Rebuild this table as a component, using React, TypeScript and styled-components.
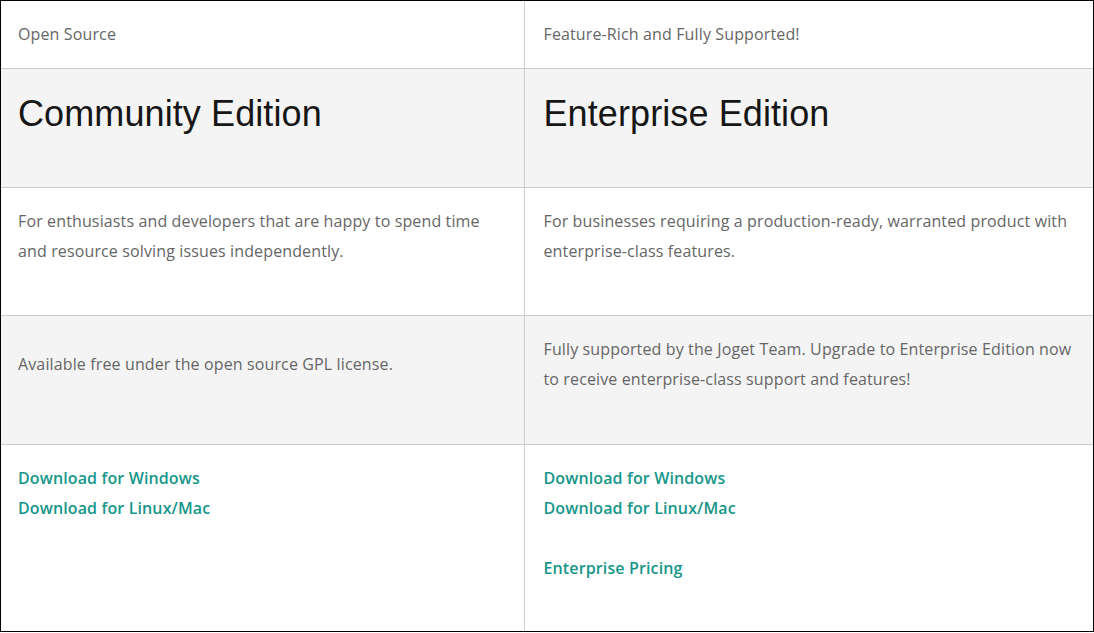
import React from "react";
import styled, { createGlobalStyle } from "styled-components";

const Global = createGlobalStyle`
  html, body { margin: 0; padding: 0; background: #fff; }
  * { box-sizing: border-box; }
`;

const Frame = styled.div`
  width: 1094px;
  height: 632px;
  border: 1px solid #000;
  overflow: hidden;
  background: #fff;
`;

const Table = styled.table`
  width: 100%;
  border-collapse: collapse;
  table-layout: fixed;
  font-family: "Open Sans", "Liberation Sans", sans-serif;
  font-size: 16px;
  line-height: 30px;
  letter-spacing: 0.13px;
  color: #666;
`;

const Row = styled.tr<{ $shade?: boolean }>`
  background: ${(p) => (p.$shade ? "#f4f4f4" : "#fff")};
  border-bottom: 1px solid #ccc;
  &:last-child { border-bottom: none; }
`;

const Cell = styled.td<{ $top?: boolean; $padB?: number }>`
  padding: 18px 18px ${(p) => p.$padB ?? 18}px 19px;
  vertical-align: ${(p) => (p.$top ? "top" : "middle")};
  &:first-child {
    border-right: 1px solid #ccc;
    width: 523px;
    padding-left: 17px;
  }
`;

const Tagline = styled.div`
  height: 31px;
  line-height: 31px;
`;

const Heading = styled.h2`
  margin: 0 0 28px;
  font-family: "Liberation Sans", Arial, sans-serif;
  font-weight: 400;
  font-size: 36px;
  line-height: 54px;
  letter-spacing: 0.1px;
  color: #161616;
`;

const Para = styled.p`
  margin: 0 0 31px;
`;

const Links = styled.div`
  display: flex;
  flex-direction: column;
  min-height: 150px;
`;

const Link = styled.a<{ $gapBefore?: boolean }>`
  color: #16968a;
  font-weight: 600;
  text-decoration: none;
  line-height: 30px;
  margin-top: ${(p) => (p.$gapBefore ? "30px" : "0")};
`;

export default function App() {
  return (
    <>
      <Global />
      <Frame>
        <Table>
          <tbody>
            <Row>
              <Cell>
                <Tagline>Open Source</Tagline>
              </Cell>
              <Cell>
                <Tagline>Feature-Rich and Fully Supported!</Tagline>
              </Cell>
            </Row>
            <Row $shade>
              <Cell>
                <Heading>Community Edition</Heading>
              </Cell>
              <Cell>
                <Heading>Enterprise Edition</Heading>
              </Cell>
            </Row>
            <Row>
              <Cell>
                <Para>
                  For enthusiasts and developers that are happy to spend time
                  and resource solving issues independently.
                </Para>
              </Cell>
              <Cell>
                <Para>
                  For businesses requiring a production-ready, warranted product
                  with enterprise-class features.
                </Para>
              </Cell>
            </Row>
            <Row $shade>
              <Cell $padB={19}>
                <Para>Available free under the open source GPL license.</Para>
              </Cell>
              <Cell $padB={19}>
                <Para>
                  Fully supported by the Joget Team. Upgrade to Enterprise
                  Edition now to receive enterprise-class support and features!
                </Para>
              </Cell>
            </Row>
            <Row>
              <Cell $top>
                <Links>
                  <Link href="#">Download for Windows</Link>
                  <Link href="#">Download for Linux/Mac</Link>
                </Links>
              </Cell>
              <Cell $top>
                <Links>
                  <Link href="#">Download for Windows</Link>
                  <Link href="#">Download for Linux/Mac</Link>
                  <Link href="#" $gapBefore>
                    Enterprise Pricing
                  </Link>
                </Links>
              </Cell>
            </Row>
          </tbody>
        </Table>
      </Frame>
    </>
  );
}
